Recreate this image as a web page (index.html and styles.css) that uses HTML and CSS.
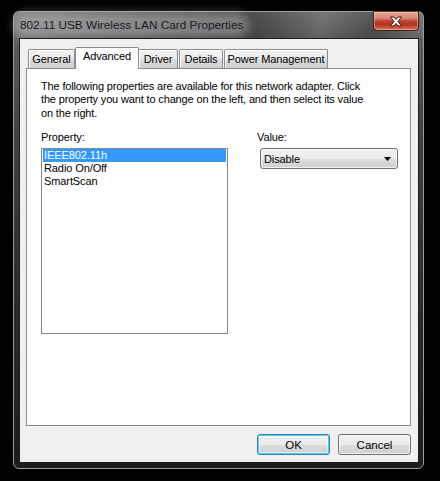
FILE: index.html
```html
<!DOCTYPE html>
<html lang="en">
<head>
    <meta charset="UTF-8">
    <meta name="viewport" content="width=device-width, initial-scale=1.0">
    <title>802.11 USB Wireless LAN Card Properties</title>
    <link rel="stylesheet" href="styles.css">
</head>
<body>
    <div class="window">
        <div class="titlebar">
            <span class="title">802.11 USB Wireless LAN Card Properties</span>
            <button class="close" aria-label="Close">
                <svg width="14" height="11" viewBox="0 0 14 11">
                    <path d="M1.5 1h3.5l2 2.6 2-2.6h3.5l-3.6 4.5 3.6 4.5h-3.5l-2-2.6-2 2.6h-3.5l3.6-4.5z" fill="#fff" stroke="#3a1a14" stroke-width="1" stroke-linejoin="round"/>
                </svg>
            </button>
        </div>
        <div class="client">
            <div class="tabs">
                <div class="tab tab-general">General</div>
                <div class="tab tab-advanced active">Advanced</div>
                <div class="tab tab-driver">Driver</div>
                <div class="tab tab-details">Details</div>
                <div class="tab tab-power">Power Management</div>
            </div>
            <div class="panel">
                <p class="intro">The following properties are available for this network adapter. Click the property you want to change on the left, and then select its value on the right.</p>
                <div class="fields">
                    <div class="field field-property">
                        <label>Property:</label>
                        <ul class="listbox">
                            <li class="selected">IEEE802.11h</li>
                            <li>Radio On/Off</li>
                            <li>SmartScan</li>
                        </ul>
                    </div>
                    <div class="field field-value">
                        <label>Value:</label>
                        <div class="combo">
                            <span>Disable</span>
                            <svg width="7" height="4" viewBox="0 0 7 4"><path d="M0 0h7L3.5 4z" fill="#000"/></svg>
                        </div>
                    </div>
                </div>
            </div>
            <div class="buttons">
                <button class="btn btn-default">OK</button>
                <button class="btn">Cancel</button>
            </div>
        </div>
    </div>
</body>
</html>
```
FILE: styles.css
```css
html, body {
    margin: 0;
    padding: 0;
    background: #000;
}
body {
    padding: 11px 0 0 13px;
    font-family: "Liberation Sans", Arial, sans-serif;
    font-size: 11px;
    letter-spacing: -0.1px;
    color: #000;
}
.window {
    box-sizing: border-box;
    width: 411px;
    height: 458px;
    border: 1px solid #9c9c9c;
    border-radius: 6px;
    padding: 0 4px 5px 5px;
    display: flex;
    flex-direction: column;
    background: linear-gradient(180deg, #757575 0, #5e5e5e 26px, #424242 120px, #2a2a2a 300px, #1c1c1c 100%);
}
.titlebar {
    height: 26px;
    display: flex;
    align-items: flex-start;
    margin: 0 -4px 0 -5px;
    padding: 0 4px 0 5px;
    background: linear-gradient(100deg, rgba(255,255,255,0.06) 0, rgba(0,0,0,0.4) 55%, rgba(255,255,255,0.02) 75%, rgba(0,0,0,0.25) 88%, rgba(255,255,255,0.08) 100%);
}
.title {
    margin-top: 6px;
    padding: 0 1px;
    font-size: 11.8px;
    letter-spacing: 0;
    line-height: 15px;
    color: #1a1a28;
    background: rgba(230, 230, 230, 0.35);
    border-radius: 8px;
    box-shadow: 0 0 10px 6px rgba(230, 230, 230, 0.33);
}
.close {
    margin-left: auto;
    margin-top: -1px;
    width: 46px;
    height: 20px;
    padding: 0;
    border: 1px solid #4a1d16;
    border-top-color: #6a3a32;
    border-radius: 0 0 5px 5px;
    background: linear-gradient(180deg, #e2aa98 0, #d38876 35%, #c2412b 50%, #b43220 70%, #d2765e 100%);
    box-shadow: inset 0 0 0 1px rgba(255, 210, 200, 0.45);
    display: flex;
    align-items: center;
    justify-content: center;
}
.client {
    flex: 1;
    border: 1px solid #1e1e1e;
    background: #f0f0f0;
    display: flex;
    flex-direction: column;
    padding: 8px 7px 0 6px;
}
.tabs {
    display: flex;
    align-items: flex-end;
    height: 21px;
    padding-left: 2px;
    position: relative;
    z-index: 1;
}
.tab {
    box-sizing: border-box;
    height: 19px;
    border: 1px solid #898c95;
    border-bottom: none;
    border-radius: 2px 2px 0 0;
    background: linear-gradient(180deg, #f2f2f2 0, #ebebeb 50%, #dddddd 51%, #cfcfcf 100%);
    box-shadow: inset 1px 1px 0 #fff;
    text-align: center;
    line-height: 18px;
    margin-right: 1px;
}
.tab-general { width: 47px; }
.tab-advanced { width: 64px; }
.tab-driver { width: 40px; }
.tab-details { width: 44px; }
.tab-power { width: 104px; }
.tab.active {
    height: 22px;
    margin: 0 -1px -1px -1px;
    background: #fff;
    box-shadow: none;
    line-height: 17px;
}
.panel {
    height: 358px;
    box-sizing: border-box;
    border: 1px solid #898c95;
    background: #fff;
    padding: 11px 0 0 14px;
}
.intro {
    margin: 0;
    line-height: 13.4px;
    width: 328px;
    letter-spacing: -0.15px;
}
.fields {
    display: flex;
    margin-top: 11px;
}
.field {
    flex-shrink: 0;
}
.field label {
    display: block;
    line-height: 13px;
    margin-bottom: 4px;
}
.field-property {
    width: 187px;
}
.field-value {
    margin-left: 29px;
}
.listbox {
    list-style: none;
    margin: 0;
    padding: 0 1px;
    height: 186px;
    border: 1px solid #828790;
    box-sizing: border-box;
}
.listbox li {
    line-height: 13px;
    padding-left: 1px;
}
.listbox li.selected {
    background: #3399ff;
    color: #fff;
}
.combo {
    margin-left: 3px;
    width: 138px;
    height: 21px;
    box-sizing: border-box;
    border: 1px solid #707070;
    border-radius: 3px;
    background: linear-gradient(180deg, #f2f2f2 0, #ebebeb 50%, #dddddd 51%, #cfcfcf 100%);
    box-shadow: inset 0 0 0 1px rgba(255,255,255,0.7);
    display: flex;
    align-items: center;
    justify-content: space-between;
    padding: 0 6px 0 3px;
}
.buttons {
    display: flex;
    justify-content: flex-end;
    gap: 8px;
    padding-top: 8px;
}
.btn {
    width: 73px;
    height: 21px;
    padding: 0;
    font-family: "Liberation Sans", Arial, sans-serif;
    font-size: 11.5px;
    color: #000;
    border: 1px solid #707070;
    border-radius: 3px;
    background: linear-gradient(180deg, #f2f2f2 0, #ebebeb 50%, #dddddd 51%, #cfcfcf 100%);
    box-shadow: inset 0 0 0 1px rgba(255,255,255,0.7);
}
.btn-default {
    border-color: #3c7fb1;
    box-shadow: inset 0 0 0 1px #48d0f8, inset 0 0 0 2px rgba(255,255,255,0.5);
}
```
